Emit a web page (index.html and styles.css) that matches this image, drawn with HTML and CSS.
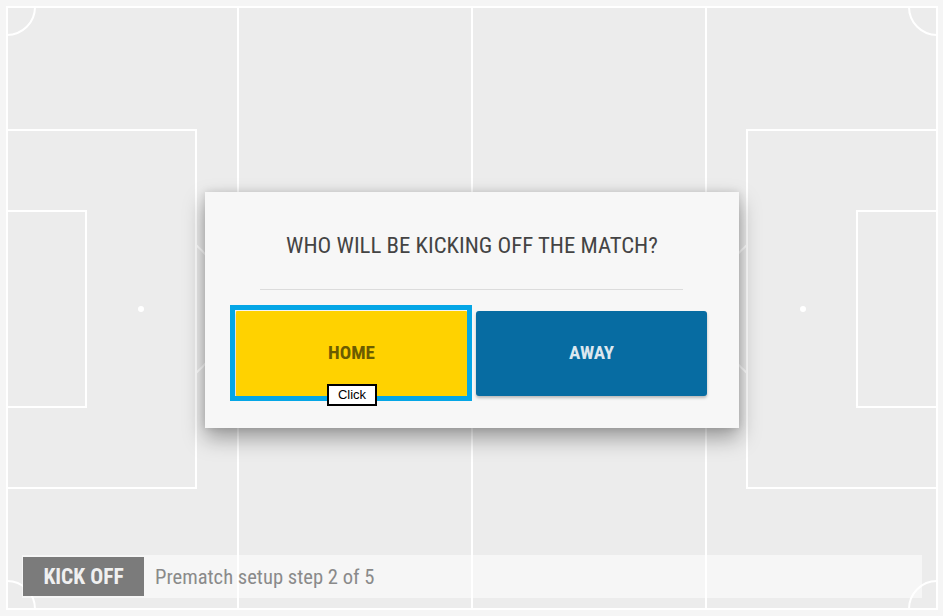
FILE: index.html
```html
<!DOCTYPE html>
<html lang="en">
<head>
    <meta charset="UTF-8">
    <meta name="viewport" content="width=device-width, initial-scale=1.0">
    <title>Kick Off</title>
    <link rel="stylesheet" href="styles.css">
</head>
<body>
    <div class="stage">
        <!-- pitch markings -->
        <svg class="pitch" viewBox="0 0 943 616" width="943" height="616">
            <rect x="0" y="0" width="943" height="616" fill="#f5f5f5"/>
            <g fill="none" stroke="#ffffff" stroke-width="2">
                <rect x="7" y="7" width="930" height="602" fill="#ececec"/>
                <line x1="238" y1="7" x2="238" y2="609"/>
                <line x1="472" y1="7" x2="472" y2="609"/>
                <line x1="706" y1="7" x2="706" y2="609"/>
                <circle cx="472" cy="308" r="90"/>
                <rect x="7" y="130" width="189" height="358"/>
                <rect x="7" y="211" width="79" height="196"/>
                <rect x="747" y="130" width="190" height="358"/>
                <rect x="857" y="211" width="80" height="196"/>
                <path d="M196 245 A84 84 0 0 1 196 373"/>
                <path d="M747 245 A84 84 0 0 0 747 373"/>
                <path d="M7 35 A28 28 0 0 0 35 7"/>
                <path d="M909 7 A28 28 0 0 0 937 35"/>
                <path d="M7 581 A28 28 0 0 1 35 609"/>
                <path d="M909 609 A28 28 0 0 1 937 581"/>
            </g>
            <g fill="#ffffff">
                <circle cx="141" cy="309" r="3"/>
                <circle cx="803" cy="309" r="3"/>
                <circle cx="472" cy="308" r="3"/>
            </g>
        </svg>

        <section class="dialog">
            <h2 class="dialog-title">WHO WILL BE KICKING OFF THE MATCH?</h2>
            <hr class="dialog-rule">
            <div class="choices">
                <button class="choice choice-home">HOME</button>
                <button class="choice choice-away">AWAY</button>
                <span class="click-hint">Click</span>
            </div>
        </section>

        <footer class="status">
            <span class="status-label">KICK OFF</span>
            <span class="status-text">Prematch setup step 2 of 5</span>
        </footer>
    </div>
</body>
</html>
```

FILE: styles.css
```css
/* General */
body {
    margin: 0;
    background-color: #f5f5f5;
    font-family: 'Roboto Condensed', 'Roboto', sans-serif;
    font-stretch: condensed;
}

.stage {
    position: relative;
    width: 943px;
    height: 616px;
    display: flex;
    flex-direction: column;
    overflow: hidden;
}

.pitch {
    position: absolute;
    top: 0;
    left: 0;
}

/* Dialog */
.dialog {
    position: relative;
    width: 534px;
    margin: 192px 0 0 205px;
    padding: 40px 0 32px;
    background-color: #f7f7f7;
    box-shadow: 0 10px 20px rgba(0, 0, 0, 0.35), 0 0 8px rgba(0, 0, 0, 0.12);
    box-sizing: border-box;
}

.dialog-title {
    margin: 0;
    font-size: 22.8px;
    font-weight: 400;
    line-height: 28px;
    color: #444;
    text-align: center;
}

.dialog-rule {
    margin: 29px 56px 21px 55px;
    border: none;
    border-top: 1px solid #dcdcdc;
}

.choices {
    position: relative;
    display: flex;
    gap: 9px;
    padding: 0 32px 0 31px;
}

.choice {
    position: relative;
    flex: 1;
    height: 85px;
    padding: 0 0 2px;
    border: none;
    border-radius: 3px;
    font-family: inherit;
    font-stretch: condensed;
    font-size: 19px;
    font-weight: 700;
    cursor: pointer;
    box-shadow: 0 2px 3px rgba(0, 0, 0, 0.25);
}

.choice-home {
    background-color: #ffd200;
    color: #6b5c00;
    border-radius: 1px;
}

/* focus ring, square like the original */
.choice-home::after {
    content: '';
    position: absolute;
    top: -6px;
    left: -6px;
    right: -5px;
    bottom: -5px;
    border: 5px solid #05a6e6;
}

.choice-away {
    background-color: #076ca2;
    color: #dbe7ef;
}

.click-hint {
    position: absolute;
    left: 122px;
    top: 73px;
    width: 46px;
    height: 18px;
    border: 2px solid #000;
    background-color: #fff;
    font-family: 'Liberation Sans', Arial, sans-serif;
    font-stretch: normal;
    font-size: 13px;
    line-height: 18px;
    text-align: center;
    color: #000;
}

/* Status bar */
.status {
    position: relative;
    display: flex;
    align-items: center;
    height: 43px;
    margin: auto 21px 18px 22px;
    padding-left: 1px;
    background-color: rgba(255, 255, 255, 0.5);
}

.status-label {
    width: 121px;
    height: 39px;
    line-height: 39px;
    text-align: center;
    background-color: #7b7b7b;
    color: #f0f0f0;
    font-size: 21.5px;
    font-weight: 700;
}

.status-text {
    margin-left: 11px;
    font-size: 20.6px;
    color: #8a8a8a;
}
```
